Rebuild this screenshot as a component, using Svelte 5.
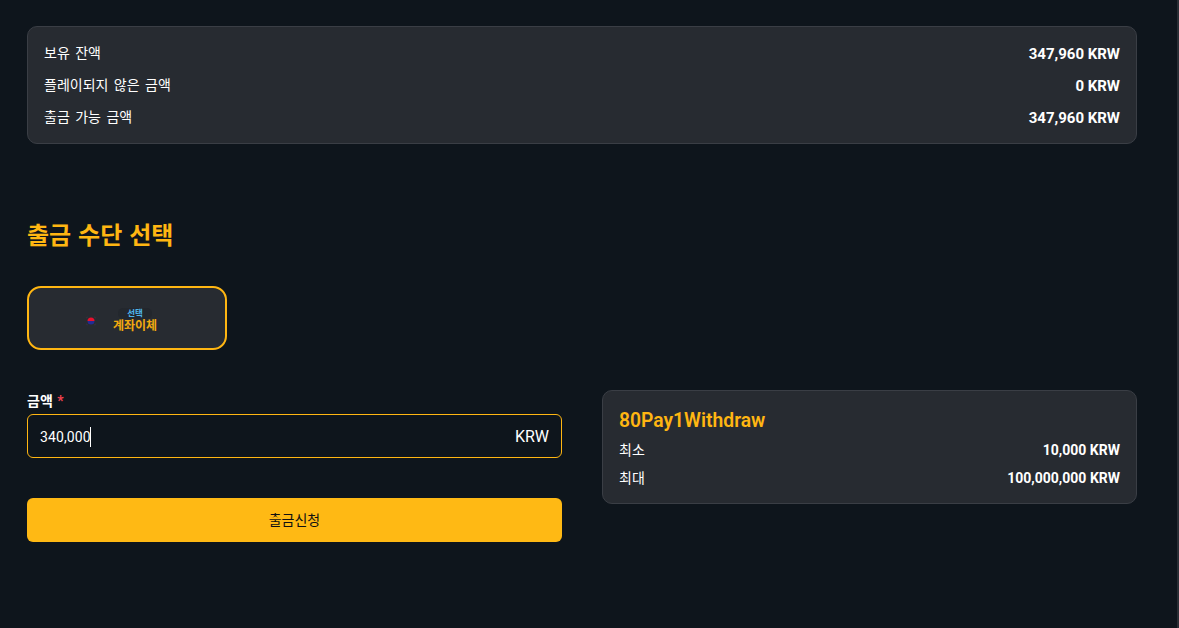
<script>
  const balances = [
    { label: '보유 잔액', value: '347,960 KRW' },
    { label: '플레이되지 않은 금액', value: '0 KRW' },
    { label: '출금 가능 금액', value: '347,960 KRW' }
  ];
  const limits = [
    { label: '최소', value: '10,000 KRW' },
    { label: '최대', value: '100,000,000 KRW' }
  ];
  let amount = '340,000';
</script>

<div class="page">
  <main class="content">
    <section class="card summary">
      {#each balances as row}
        <div class="row">
          <span class="name">{row.label}</span>
          <strong>{row.value}</strong>
        </div>
      {/each}
    </section>

    <h2>출금 수단 선택</h2>

    <button class="method" type="button">
      <svg class="flag" width="12" height="10" viewBox="0 0 12 10" aria-hidden="true">
        <path d="M1 2.2 2.8.8M11 2.2 9.2.8M1 7.8l1.8 1.4M11 7.8 9.2 9.2" stroke="#33303a" stroke-width="1.5" />
        <path d="M2.5 5a3.5 3.5 0 0 1 7 0z" fill="#e8102e" />
        <path d="M2.5 5a3.5 3.5 0 0 0 7 0z" fill="#232b92" />
      </svg>
      <span class="method-text">
        <span class="tag">선택</span>
        <span class="method-name">계좌이체</span>
      </span>
    </button>

    <div class="columns">
      <form class="form" on:submit|preventDefault>
        <label class="label" for="amount">금액 <span class="req">*</span></label>
        <div class="field">
          <input id="amount" bind:value={amount} autocomplete="off" />
          <span class="caret"></span>
          <span class="unit">KRW</span>
        </div>
        <button class="submit" type="submit">출금신청</button>
      </form>

      <aside class="card limits">
        <h3>80Pay1Withdraw</h3>
        {#each limits as row}
          <div class="row">
            <span class="name">{row.label}</span>
            <strong>{row.value}</strong>
          </div>
        {/each}
      </aside>
    </div>
  </main>
  <div class="scrollbar"></div>
</div>

<style>
  :global(body) {
    margin: 0;
    background: #0e151c;
  }

  .page {
    display: flex;
    height: 628px;
    overflow: hidden;
    background: #0e151c;
    color: #fff;
    font-family: Roboto, "Noto Sans CJK KR", sans-serif;
    font-size: 14px;
  }

  .content {
    flex: 1;
    min-width: 0;
    padding: 26px 40px 0 27px;
  }

  .scrollbar {
    width: 2px;
    background: #2a2e35;
  }

  .card {
    box-sizing: border-box;
    background: #272b31;
    border: 1px solid #3a3e45;
    border-radius: 10px;
  }

  .summary {
    height: 118px;
    padding: 10px 16px;
    display: flex;
    flex-direction: column;
  }

  .row {
    display: flex;
    justify-content: space-between;
    align-items: center;
    height: 32px;
    font-size: 14px;
  }

  .row strong {
    font-weight: 700;
  }

  .summary strong {
    font-size: 15px;
    padding-top: 2px;
  }

  .name {
    padding-bottom: 2px;
    word-spacing: 2px;
  }

  h2 {
    margin: 73px 0 0;
    height: 38px;
    line-height: 38px;
    font-size: 24px;
    font-weight: 700;
    color: #ffb612;
    word-spacing: 1px;
  }

  .method {
    display: flex;
    align-items: center;
    justify-content: center;
    gap: 16px;
    box-sizing: border-box;
    width: 200px;
    height: 64px;
    margin-top: 31px;
    padding: 4px 12px 0 0;
    background: #272b31;
    border: 2px solid #ffb612;
    border-radius: 14px;
    font-family: inherit;
  }

  .flag {
    flex: none;
    margin-top: 1px;
  }

  .method-text {
    display: flex;
    flex-direction: column;
    align-items: center;
    line-height: 1;
  }

  .tag {
    padding: 1px 9px;
    margin-bottom: 1px;
    background: #23272d;
    border-radius: 5px;
    font-size: 8.5px;
    font-weight: 700;
    color: #4fb4ea;
  }

  .method-name {
    font-size: 12px;
    font-weight: 700;
    color: #f2a90f;
  }

  .columns {
    display: grid;
    grid-template-columns: 1fr 1fr;
    gap: 40px;
    margin-top: 40px;
    align-items: start;
  }

  .form {
    display: flex;
    flex-direction: column;
  }

  .label {
    height: 24px;
    line-height: 23px;
    font-size: 14px;
    font-weight: 700;
  }

  .req {
    color: #f0424f;
    margin-left: 1px;
  }

  .field {
    display: flex;
    align-items: center;
    position: relative;
    box-sizing: border-box;
    height: 44px;
    padding: 0 12px;
    border: 1px solid #ffb612;
    border-radius: 6px;
  }

  .field input {
    flex: 1;
    min-width: 0;
    padding: 2px 0 0;
    background: none;
    border: 0;
    outline: 0;
    color: #fff;
    font-family: inherit;
    font-size: 14px;
    letter-spacing: 0.1px;
  }

  .caret {
    position: absolute;
    left: 62px;
    top: 12px;
    width: 1px;
    height: 20px;
    background: #fff;
  }

  .unit {
    font-size: 16px;
  }

  .submit {
    height: 44px;
    margin-top: 40px;
    padding: 0 0 2px;
    background: #ffb914;
    border: 0;
    border-radius: 6px;
    color: #111;
    font-family: inherit;
    font-size: 14px;
  }

  .limits {
    height: 114px;
    padding: 14px 16px 0;
  }

  h3 {
    margin: 0;
    height: 31px;
    line-height: 32px;
    font-size: 19.3px;
    font-weight: 600;
    color: #ffb612;
  }

  .limits .row {
    height: 28px;
  }
</style>
